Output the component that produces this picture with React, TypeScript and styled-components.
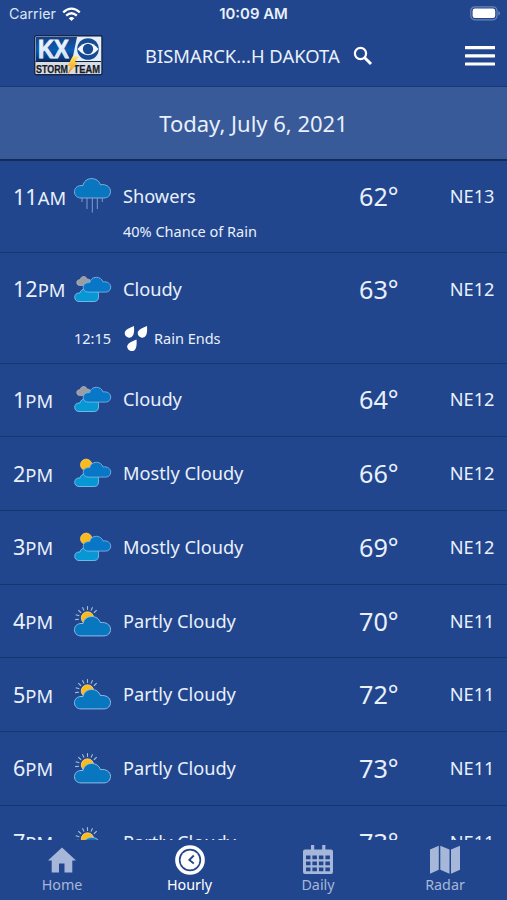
import React from "react";
import styled, { createGlobalStyle } from "styled-components";

const GlobalStyle = createGlobalStyle`
  * { box-sizing: border-box; }
  body { margin: 0; background: #21468d; }
`;

const Screen = styled.div`
  width: 507px;
  height: 900px;
  overflow: hidden;
  display: flex;
  flex-direction: column;
  background: #21468d;
  color: #e9f0fc;
  font-family: "Noto Sans", "Open Sans", sans-serif;
`;

const StatusBar = styled.div`
  height: 28px;
  flex: none;
  display: grid;
  grid-template-columns: 1fr 1fr 1fr;
  align-items: center;
  padding: 0 6px;
  font-family: Inter, sans-serif;
  line-height: 28px;
`;

const Carrier = styled.div`
  display: flex;
  align-items: center;
  gap: 6px;
  padding-left: 3px;
  font-size: 14.3px;
  color: #dbe5f6;
`;

const Clock = styled.div`
  text-align: center;
  font-weight: 600;
  font-size: 14.9px;
  white-space: nowrap;
`;

const Battery = styled.div`
  display: flex;
  justify-content: flex-end;
  padding-bottom: 1px;
`;

const Header = styled.header`
  height: 59px;
  flex: none;
  display: grid;
  grid-template-columns: 111px 208px 1fr auto;
  align-items: center;
  padding: 0 12px 3px 34px;
  border-bottom: 1px solid #193873;
`;

const Location = styled.div`
  font-size: 18.4px;
  white-space: nowrap;
`;

const IconButton = styled.button`
  display: flex;
  padding: 0;
  border: 0;
  background: none;
  color: #fff;
`;

const DateBar = styled.div`
  height: 73.500px;
  flex: none;
  display: flex;
  align-items: center;
  justify-content: center;
  background: #385a99;
  border-bottom: 2px solid #142c5c;
  font-size: 22px;
`;

const List = styled.main`
  flex: 1;
  min-height: 0;
  overflow: hidden;
`;

const Row = styled.section<{ $height: number }>`
  height: ${(p) => p.$height}px;
  border-bottom: 1px solid #17356f;
`;

const Main = styled.div`
  height: 71.800px;
  display: grid;
  grid-template-columns: 61px 49px 236px 60px 1fr;
  align-items: center;
  padding: 0 12.500px 0 13px;
  white-space: nowrap;
`;

const Time = styled.div`
  font-size: 21.6px;
`;

const Meridiem = styled.span`
  font-size: 18.4px;
`;

const Condition = styled.div`
  font-size: 18.2px;
`;

const Temperature = styled.div`
  font-size: 25.2px;
`;

const Wind = styled.div`
  font-size: 18.2px;
  text-align: right;
`;

const Chance = styled.div`
  margin: -11px 0 0 123px;
  font-size: 14.5px;
  line-height: 20px;
`;

const Event = styled.div`
  display: grid;
  grid-template-columns: 50px 30px 1fr;
  align-items: center;
  height: 27px;
  padding-left: 74px;
  font-size: 14.5px;
`;

const Tabs = styled.nav`
  height: 60px;
  flex: none;
  display: grid;
  grid-template-columns: 124px 131px 126px 128px;
  background: #21468d;
`;

const Tab = styled.div<{ $active?: boolean }>`
  display: flex;
  flex-direction: column;
  align-items: center;
  padding-top: 4px;
  color: ${(p) => (p.$active ? "#ffffff" : "#a6b7d9")};
  font-size: 14.3px;
  line-height: 18px;
`;

const TabIcon = styled.svg`
  display: block;
  width: 32px;
  height: 32px;
  flex: none;
`;

const Sky = styled.svg`
  display: block;
  width: 38px;
  height: 36px;
  overflow: visible;
`;

const CLOUD =
  "M7 20C3 20 .5 17.4 .5 13.8S3.2 7.7 7 7.6H9C9.7 3.4 13.2.6 17.7.6c4.200 0 7.500 2.400 8.700 6.100C32 5.800 36.500 9 36.500 13.400 36.500 17.200 33.900 20 29.800 20Z";

const FrontCloud = () => (
  <path d={CLOUD} transform="translate(8.800 5.800) scale(.765)" fill="#0877c8" stroke="#7fb4e4" strokeWidth="1.100" />
);

const LowCloud = () => (
  <path
    d="M5 30.500C2.400 30.500.7 28.700.7 26.200S2.500 22 5 22H6C6.500 19.500 8.400 18 11 18h9c3 0 4.500 2 4.500 5.200V26c0 2.800-1.600 4.500-4.200 4.500Z"
    fill="#0797d4"
    stroke="#7cc0e8"
    strokeWidth=".9"
  />
);

type SkyKind = "showers" | "cloudy" | "mostly" | "partly";

const SkyIcon = ({ kind }: { kind: SkyKind }) => {
  if (kind === "showers")
    return (
      <Sky viewBox="0 0 38 36">
        <path d="M8 20v4M13 20v11M18.300 20v14.500M23.300 20v11M28.300 20v4" stroke="#7f9cca" strokeWidth="1" />
        <path d={CLOUD} fill="#0877bf" stroke="#7faedd" strokeWidth="1" />
      </Sky>
    );
  if (kind === "cloudy")
    return (
      <Sky viewBox="0 0 38 36">
        <path d={CLOUD} transform="translate(2.600 5.200) scale(.4 .46)" fill="#9a9da3" stroke="#c4c3c8" strokeWidth="1.500" />
        <LowCloud />
        <FrontCloud />
      </Sky>
    );
  if (kind === "mostly")
    return (
      <Sky viewBox="0 -1 38 36">
        <circle cx="12.200" cy="8.800" r="5.700" fill="#fcbb1c" stroke="#ffd67a" strokeWidth=".7" />
        <LowCloud />
        <FrontCloud />
      </Sky>
    );
  return (
    <Sky viewBox="0 -.5 38 36">
      <g stroke="#a9bddc" strokeWidth="1.100">
        {[-95, -72, -48, -24, 0, 24, 48].map((a) => (
          <path key={a} d="M13.500 6.400V2.600" transform={`rotate(${a} 13.500 15)`} />
        ))}
      </g>
      <circle cx="13.500" cy="14.500" r="6.200" fill="#fcbb1c" stroke="#ffd67a" strokeWidth=".8" />
      <path d={CLOUD} transform="translate(0 12.400)" fill="#0877bf" stroke="#8dbde8" strokeWidth="1" />
    </Sky>
  );
};

const Logo = () => (
  <svg width="69" height="41" viewBox="0 0 69 41">
    <defs>
      <linearGradient id="night" x2="0" y2="1">
        <stop stopColor="#173f82" />
        <stop offset=".55" stopColor="#0a5bb5" />
        <stop offset="1" stopColor="#0b2c66" />
      </linearGradient>
      <linearGradient id="steel" x2="0" y2="1">
        <stop stopColor="#ffffff" />
        <stop offset="1" stopColor="#c8dbf4" />
      </linearGradient>
      <linearGradient id="bolt" x2="0" y2="1">
        <stop stopColor="#ffe45c" />
        <stop offset="1" stopColor="#f08b16" />
      </linearGradient>
    </defs>
    <rect x=".7" y=".7" width="67.300" height="39" rx="1.500" fill="#d8dce4" stroke="#14264c" strokeWidth="1.400" />
    <rect x="2" y="2" width="41" height="24" fill="url(#night)" />
    <path d="M43 2h24v24H38Z" fill="#e5edf8" />
    <text x="4" y="22.500" textLength="31" lengthAdjust="spacingAndGlyphs" fontFamily="Liberation Sans" fontWeight="700" fontSize="25" fill="url(#steel)" stroke="#e6effb" strokeWidth=".8">KX</text>
    <circle cx="54" cy="14" r="10.800" fill="#174a92" />
    <path d="M43.500 14Q54 1.500 64.500 14 54 26.500 43.500 14Z" fill="#f4f8ff" />
    <circle cx="54" cy="14" r="5.200" fill="#174a92" />
    <path d="M1.500 26.500H67" stroke="#0e2347" strokeWidth="1.200" />
    <g fontFamily="Liberation Sans" fontWeight="700" fontSize="11.500" fill="#161b26" stroke="#161b26" strokeWidth=".25">
      <text x="2" y="37.500" textLength="32" lengthAdjust="spacingAndGlyphs">STORM</text>
      <text x="39.500" y="37.500" textLength="26.500" lengthAdjust="spacingAndGlyphs">TEAM</text>
    </g>
    <path d="M38.500 21.500h6.500l-4.500 6h3.200L33.500 40l3-9H33.500Z" fill="url(#bolt)" />
  </svg>
);

const WifiIcon = () => (
  <svg width="19" height="15" viewBox="0 0 19 15" fill="none" stroke="#fff" strokeWidth="2.300">
    <path d="M1.200 5.300Q9.500-2 17.800 5.300" />
    <path d="M4.200 8.600Q9.500 4 14.800 8.600" />
    <path d="M6.700 11.200Q9.500 9 12.300 11.200L9.500 14Z" fill="#fff" stroke="none" />
  </svg>
);

const BatteryIcon = () => (
  <svg width="31" height="15" viewBox="0 0 31 15">
    <rect x=".8" y=".8" width="26.200" height="13" rx="4" fill="none" stroke="#6a85b8" strokeWidth="1.200" />
    <rect x="2.600" y="2.600" width="22.600" height="9.400" rx="2.300" fill="#fff" />
    <path d="M28.300 5v4.600q1.700-.7 1.700-2.300t-1.700-2.300Z" fill="#6a85b8" />
  </svg>
);

const SearchIcon = () => (
  <svg width="20" height="20" viewBox="0 0 20 20" fill="none" stroke="#fff">
    <circle cx="7.500" cy="7.500" r="5.600" strokeWidth="2.200" />
    <path d="M11.700 11.700 18 18" strokeWidth="3" />
  </svg>
);

const MenuIcon = () => (
  <svg width="30" height="22" viewBox="0 0 30 22" fill="#fff">
    <rect y="1" width="30" height="3.200" rx=".5" />
    <rect y="9.200" width="30" height="3.200" rx=".5" />
    <rect y="17.400" width="30" height="3.200" rx=".5" />
  </svg>
);

const DROP = "M9.300 0C9.600 4 9.400 6.500 8.500 8.300A4.500 4.500 0 0 1 0 6.300C.3 3.500 4.500 1.800 9.300 0Z";

const DropsIcon = () => (
  <svg width="24" height="26" viewBox="0 0 24 26" fill="#fff">
    <path d={DROP} transform="translate(.7 1) scale(1 1.080)" />
    <path d={DROP} transform="translate(13.700 1) scale(1 1.080)" />
    <path d={DROP} transform="translate(3.200 14.500) scale(1 1.080)" />
  </svg>
);

type HourData = {
  hour: number;
  half: "AM" | "PM";
  sky: SkyKind;
  label: string;
  temp: number;
  wind: string;
  height: number;
  chance?: string;
  event?: { at: string; text: string };
};

const HOURS: HourData[] = [
  { hour: 11, half: "AM", sky: "showers", label: "Showers", temp: 62, wind: "NE13", height: 92.3, chance: "40% Chance of Rain" },
  { hour: 12, half: "PM", sky: "cloudy", label: "Cloudy", temp: 63, wind: "NE12", height: 110.8, event: { at: "12:15", text: "Rain Ends" } },
  { hour: 1, half: "PM", sky: "cloudy", label: "Cloudy", temp: 64, wind: "NE12", height: 73.7 },
  { hour: 2, half: "PM", sky: "mostly", label: "Mostly Cloudy", temp: 66, wind: "NE12", height: 73.7 },
  { hour: 3, half: "PM", sky: "mostly", label: "Mostly Cloudy", temp: 69, wind: "NE12", height: 73.7 },
  { hour: 4, half: "PM", sky: "partly", label: "Partly Cloudy", temp: 70, wind: "NE11", height: 73.7 },
  { hour: 5, half: "PM", sky: "partly", label: "Partly Cloudy", temp: 72, wind: "NE11", height: 73.7 },
  { hour: 6, half: "PM", sky: "partly", label: "Partly Cloudy", temp: 73, wind: "NE11", height: 73.7 },
  { hour: 7, half: "PM", sky: "partly", label: "Partly Cloudy", temp: 73, wind: "NE11", height: 73.7 },
];

const Hour = ({ data }: { data: HourData }) => (
  <Row $height={data.height}>
    <Main>
      <Time>
        {data.hour}
        <Meridiem>{data.half}</Meridiem>
      </Time>
      <SkyIcon kind={data.sky} />
      <Condition>{data.label}</Condition>
      <Temperature>{data.temp}°</Temperature>
      <Wind>{data.wind}</Wind>
    </Main>
    {data.chance && <Chance>{data.chance}</Chance>}
    {data.event && (
      <Event>
        <span>{data.event.at}</span>
        <DropsIcon />
        <span>{data.event.text}</span>
      </Event>
    )}
  </Row>
);

export default function App() {
  return (
    <Screen>
      <GlobalStyle />
      <StatusBar>
        <Carrier>
          Carrier <WifiIcon />
        </Carrier>
        <Clock>10:09 AM</Clock>
        <Battery>
          <BatteryIcon />
        </Battery>
      </StatusBar>
      <Header>
        <Logo />
        <Location>BISMARCK...H DAKOTA</Location>
        <IconButton aria-label="Search">
          <SearchIcon />
        </IconButton>
        <IconButton aria-label="Menu">
          <MenuIcon />
        </IconButton>
      </Header>
      <DateBar>Today, July 6, 2021</DateBar>
      <List>
        {HOURS.map((h) => (
          <Hour key={h.hour} data={h} />
        ))}
      </List>
      <Tabs>
        <Tab>
          <TabIcon viewBox="0 0 32 32" fill="currentColor">
            <path d="M16 3.500 2 16.500h3.700v12H13V19.500h5.500v9h7.800v-12H30Z" />
          </TabIcon>
          Home
        </Tab>
        <Tab $active>
          <TabIcon viewBox="0 0 32 32" fill="none" stroke="currentColor">
            <circle cx="16" cy="16" r="13" strokeWidth="3.700" />
            <circle cx="16" cy="16" r="9.500" fill="currentColor" stroke="none" />
            <path d="m19.800 11.500-4.500 4.500 4.500 3.500" stroke="#21468d" strokeWidth="1.800" />
          </TabIcon>
          Hourly
        </Tab>
        <Tab>
          <TabIcon viewBox="0 0 32 32" fill="currentColor">
            <path
              fillRule="evenodd"
              d="M9 1h3.200v4.500h8V1h3.200v4.500H29q2 0 2 2V28q0 2-2 2H3q-2 0-2-2V7.500q0-2 2-2h6ZM4 11.500v3.700h4.500v-3.700Zm6.400 0v3.700h4.500v-3.700Zm6.500 0v3.700h4.500v-3.700Zm6.500 0v3.700h4.500v-3.700ZM4 17.500v3.700h4.500v-3.700Zm6.400 0v3.700h4.500v-3.700Zm6.500 0v3.700h4.500v-3.700Zm6.500 0v3.700h4.500v-3.700ZM4 23.500v3.700h4.500v-3.700Zm6.400 0v3.700h4.500v-3.700Zm6.500 0v3.700h4.500v-3.700Zm6.500 0v3.700h4.500v-3.700Z"
            />
          </TabIcon>
          Daily
        </Tab>
        <Tab>
          <TabIcon viewBox="0 0 32 32" fill="currentColor">
            <path d="m1 5.500 8.800-3.700v24L1 29.700ZM11.300 1.800l9.200 3.700v24.200l-9.200-3.900ZM22 5.500l9-3.700v24l-9 3.900Z" />
          </TabIcon>
          Radar
        </Tab>
      </Tabs>
    </Screen>
  );
}
